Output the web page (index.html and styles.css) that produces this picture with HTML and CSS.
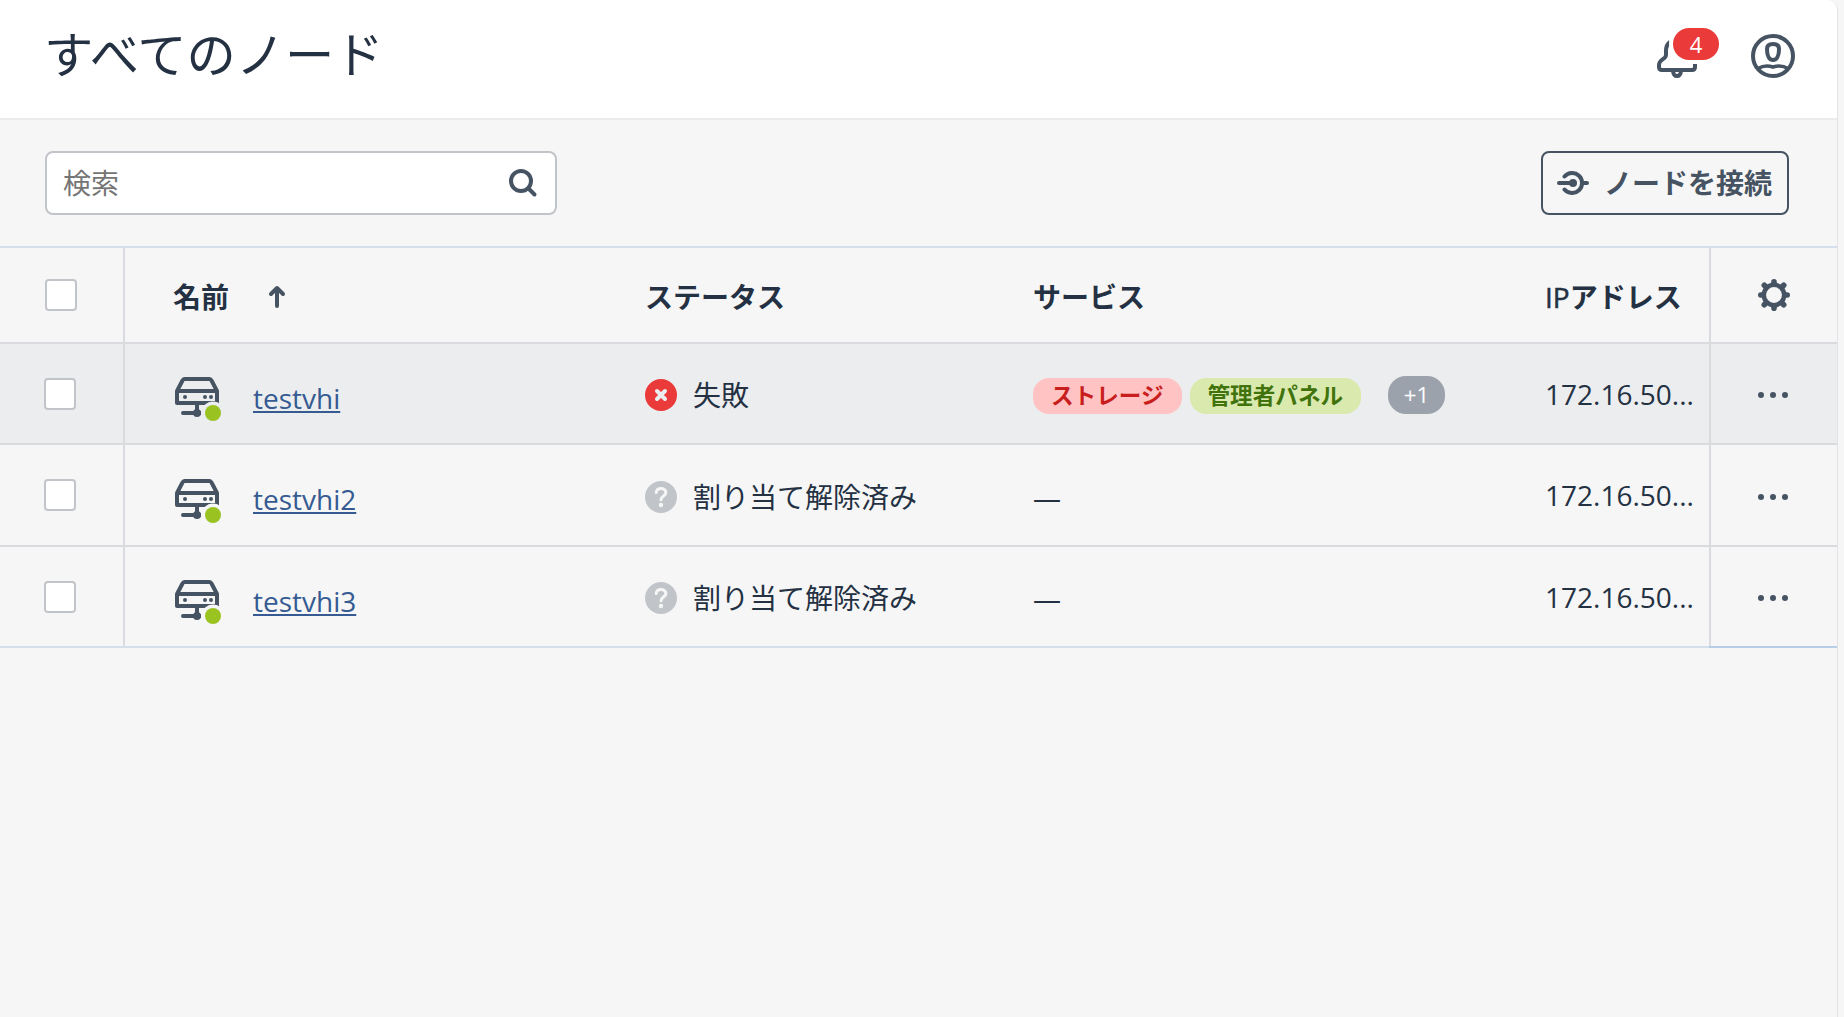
FILE: index.html
```html
<!DOCTYPE html>
<html lang="ja">
<head>
<meta charset="utf-8">
<title>すべてのノード</title>
<link rel="stylesheet" href="styles.css">
</head>
<body>
<svg class="defs" width="0" height="0">
  <symbol id="server" viewBox="0 0 50 50">
    <g fill="none" stroke="#465362" stroke-width="4" stroke-linejoin="round" stroke-linecap="round">
      <path d="M4 17 9.500 6.500Q10.200 5 11.500 5H36.500Q37.800 5 38.500 6.500L44 17V29H4V17H44"/>
      <path d="M24 29V39" stroke-linecap="butt"/>
      <path d="M10 39H24"/>
    </g>
    <g fill="#465362"><circle cx="12" cy="23" r="2"/><circle cx="32" cy="23" r="2"/><circle cx="38" cy="23" r="2"/><circle cx="24" cy="39" r="4"/><rect x="23" y="37" width="5" height="4"/></g>
    <circle class="halo" cx="40" cy="39" r="11.500"/>
    <circle cx="40" cy="39" r="8" fill="#9ac322"/>
  </symbol>
  <symbol id="unknown" viewBox="0 0 32 32">
    <circle cx="16" cy="16" r="16" fill="#c1c4c9"/>
    <path d="M11.200 11.600C11.500 9 13.300 7.500 16 7.500S20.900 9 20.900 11.500C20.900 15 16 15 16 18.800" fill="none" stroke="#f6f6f6" stroke-width="3" stroke-linecap="round"/>
    <circle cx="16" cy="24" r="2.200" fill="#f6f6f6"/>
  </symbol>
  <symbol id="more" viewBox="0 0 30 6"><g fill="#465362"><circle cx="3" cy="3" r="3"/><circle cx="15" cy="3" r="3"/><circle cx="27" cy="3" r="3"/></g></symbol>
</svg>
<main class="panel">
  <header class="header">
    <h1 class="title">すべてのノード</h1>
    <div class="actions">
      <div class="bell">
        <svg width="62" height="50" viewBox="0 0 62 50" fill="none" stroke="#465362" stroke-width="4">
          <path d="M13 8C9.500 10.500 9 14 9 17V21C9 25.500 2 25 2 31V33Q2 36 5 36H35Q38 36 38 33V30"/>
          <path d="M16 37Q16.500 42 20 42T24 37"/>
        </svg>
        <span class="badge">4</span>
      </div>
      <svg width="44" height="44" viewBox="0 0 44 44" fill="none" stroke="#465362" stroke-width="4">
        <circle cx="22" cy="22" r="20"/>
        <path d="M22 10C18 10 16 11.500 16 15C16 21 18 26 22 26S28 21 28 15C28 11.500 26 10 22 10Z"/>
        <path d="M7 34.500C12 31.500 16 31 22 33C28 31 32 31.500 37 34.500" stroke-width="3.600"/>
      </svg>
    </div>
  </header>
  <div class="toolbar">
    <label class="search">
      <input class="search-input" type="text" placeholder="検索">
      <svg width="30" height="30" viewBox="0 0 30 30" fill="none" stroke="#465362" stroke-width="4" stroke-linecap="round"><circle cx="13" cy="13" r="10"/><path d="M20.500 20.500 26.500 26.500"/></svg>
    </label>
    <button class="connect">
      <svg width="32" height="24" viewBox="0 0 32 24" fill="none" stroke="#465362" stroke-width="4" stroke-linecap="round"><path d="M7.500 5.500A10 10 0 1 1 7.500 18.500M2 12H14M26 12H30"/><circle cx="16" cy="12" r="4" fill="#465362" stroke="none"/></svg>
      <span>ノードを接続</span>
    </button>
  </div>
  <section class="table">
    <div class="row head">
      <div class="cell check"><span class="box"></span></div>
      <div class="cell name">名前<svg class="sort" width="18" height="24" viewBox="0 0 18 24" fill="none" stroke="#465362" stroke-width="4" stroke-linecap="round" stroke-linejoin="round"><path d="M9 21V3M3 9 9 3 15 9"/></svg></div>
      <div class="cell label">ステータス</div>
      <div class="cell label">サービス</div>
      <div class="cell label ip"><span class="latin">IP</span>アドレス</div>
      <div class="cell menu">
        <svg width="32" height="32" viewBox="-16 -16 32 32" stroke="#465362" stroke-linecap="round"><circle r="10.200" fill="none" stroke-width="4.500"/><path stroke-width="5.600" d="M0-13.200V-11M0 11V13.200M-13.200 0H-11M11 0H13.200M-9.700-9.700-8.500-8.500M9.700-9.700 8.500-8.500M-9.700 9.700-8.500 8.500M9.700 9.700 8.500 8.500"/></svg>
      </div>
    </div>
    <div class="row active">
      <div class="cell check"><span class="box"></span></div>
      <div class="cell name"><svg class="server" width="50" height="50"><use href="#server"/></svg><a class="link" href="#">testvhi</a></div>
      <div class="cell status"><svg width="32" height="32" viewBox="0 0 32 32"><circle cx="16" cy="16" r="16" fill="#eb3a3a"/><path d="M12 12 20 20M20 12 12 20" stroke="#ecedef" stroke-width="4" stroke-linecap="round"/></svg>失敗</div>
      <div class="cell tags"><span class="tag red">ストレージ</span><span class="tag green">管理者パネル</span><span class="count">+1</span></div>
      <div class="cell ip">172.16.50...</div>
      <div class="cell menu"><svg width="30" height="6"><use href="#more"/></svg></div>
    </div>
    <div class="row second">
      <div class="cell check"><span class="box"></span></div>
      <div class="cell name"><svg class="server" width="50" height="50"><use href="#server"/></svg><a class="link" href="#">testvhi2</a></div>
      <div class="cell status"><svg width="32" height="32"><use href="#unknown"/></svg>割り当て解除済み</div>
      <div class="cell dash">—</div>
      <div class="cell ip">172.16.50...</div>
      <div class="cell menu"><svg width="30" height="6"><use href="#more"/></svg></div>
    </div>
    <div class="row last">
      <div class="cell check"><span class="box"></span></div>
      <div class="cell name"><svg class="server" width="50" height="50"><use href="#server"/></svg><a class="link" href="#">testvhi3</a></div>
      <div class="cell status"><svg width="32" height="32"><use href="#unknown"/></svg>割り当て解除済み</div>
      <div class="cell dash">—</div>
      <div class="cell ip">172.16.50...</div>
      <div class="cell menu"><svg width="30" height="6"><use href="#more"/></svg></div>
    </div>
  </section>
</main>
</body>
</html>
```
FILE: styles.css
```css
* { box-sizing: border-box; }
body {
  margin: 0;
  height: 1017px;
  overflow: hidden;
  background: #f6f6f6;
  color: #243143;
  font: 28px/40px "Open Sans", "Noto Sans CJK JP", sans-serif;
}
.defs { display: block; width: 0; height: 0; }
svg { display: block; flex: none; }
.panel {
  width: 1838px;
  height: 1017px;
  background: #f6f6f6;
  border-right: 1px solid #e2e3e5;
  border-top-right-radius: 10px;
  overflow: hidden;
}
.header {
  display: flex;
  justify-content: space-between;
  height: 120px;
  padding: 0 42px 0 44px;
  background: #fff;
  border-bottom: 2px solid #ebebec;
}
.title { margin: 19px 0 0; font-size: 49.3px; line-height: 70px; font-weight: 400; }
.actions { display: flex; padding-top: 34px; gap: 32px; }
.bell { position: relative; width: 62px; height: 50px; }
.badge {
  position: absolute;
  left: 16px;
  top: -6px;
  width: 46px;
  height: 32px;
  border-radius: 16px;
  background: #eb3a3a;
  box-shadow: 0 0 0 4px #fff;
  color: #fff;
  font-size: 22px;
  line-height: 33px;
  text-align: center;
}
.toolbar {
  display: flex;
  justify-content: space-between;
  height: 126px;
  padding: 31px 48px 0 45px;
}
.search {
  display: flex;
  align-items: center;
  width: 512px;
  height: 64px;
  padding: 0 17px 0 16px;
  background: #fff;
  border: 2px solid #c1c4c9;
  border-radius: 8px;
}
.search-input {
  flex: 1;
  min-width: 0;
  padding: 0;
  border: 0;
  outline: 0;
  background: none;
  font: inherit;
}
.search-input::placeholder { color: #757575; opacity: 1; }
.connect {
  display: flex;
  align-items: center;
  gap: 15px;
  width: 248px;
  height: 64px;
  padding: 0 14px;
  background: none;
  border: 2px solid #465362;
  border-radius: 8px;
  color: #465362;
  font: inherit;
  font-weight: 700;
  white-space: nowrap;
}
.table { border-top: 2px solid #d4dfec; }
.row {
  display: grid;
  grid-template-columns: 125px 520px 388px 513px 163px 128px;
  height: 101px;
  border-bottom: 2px solid #dadbdf;
}
.head { height: 96px; font-weight: 700; }
.active { background: #ecedef; --row: #ecedef; }
.second { height: 102px; }
.last { border-bottom-color: #d4dfec; }
.cell { display: flex; align-items: center; min-width: 0; white-space: nowrap; }
.check { padding-left: 44px; border-right: 2px solid #dadbdf; }
.head .check { padding-left: 45px; }
.box { width: 32px; height: 32px; border: 2px solid #c1c4c9; border-radius: 4px; background: #fff; }
.name { padding-left: 48px; }
.head .name, .label { padding-top: 3px; }
.sort { margin-left: 39px; }
.server { margin: 11px 30px 0 0; }
.halo { fill: var(--row, #f6f6f6); }
.link {
  margin-top: 8px;
  color: #355b92;
  text-decoration: underline;
  text-decoration-thickness: 2px;
  text-underline-offset: 2px;
  text-decoration-skip-ink: none;
}
.status { gap: 16px; padding-top: 3px; }
.dash { padding-top: 3px; }
.ip { margin-left: -1px; }
.tags { padding-top: 3px; }
.tag {
  height: 36px;
  margin: 2px 8px 0 0;
  padding: 0 18px;
  border-radius: 16px;
  font-size: 22.6px;
  line-height: 36px;
  font-weight: 700;
}
.red { background: #ffc3c3; color: #c81e1e; }
.green { background: #daeaae; color: #41730d; }
.count {
  width: 57px;
  height: 38px;
  margin-left: 19px;
  border-radius: 18px;
  background: #9ca2ab;
  color: #fff;
  font-size: 22.4px;
  line-height: 38px;
  text-align: center;
}
.latin { font-weight: 400; -webkit-text-stroke: 0.5px; }
.menu { justify-content: center; border-left: 2px solid #dadbdf; }
.row:not(.head) .menu { padding: 3px 2px 0 0; }
.last .menu { box-shadow: 0 2px #b8cde6; }
```
